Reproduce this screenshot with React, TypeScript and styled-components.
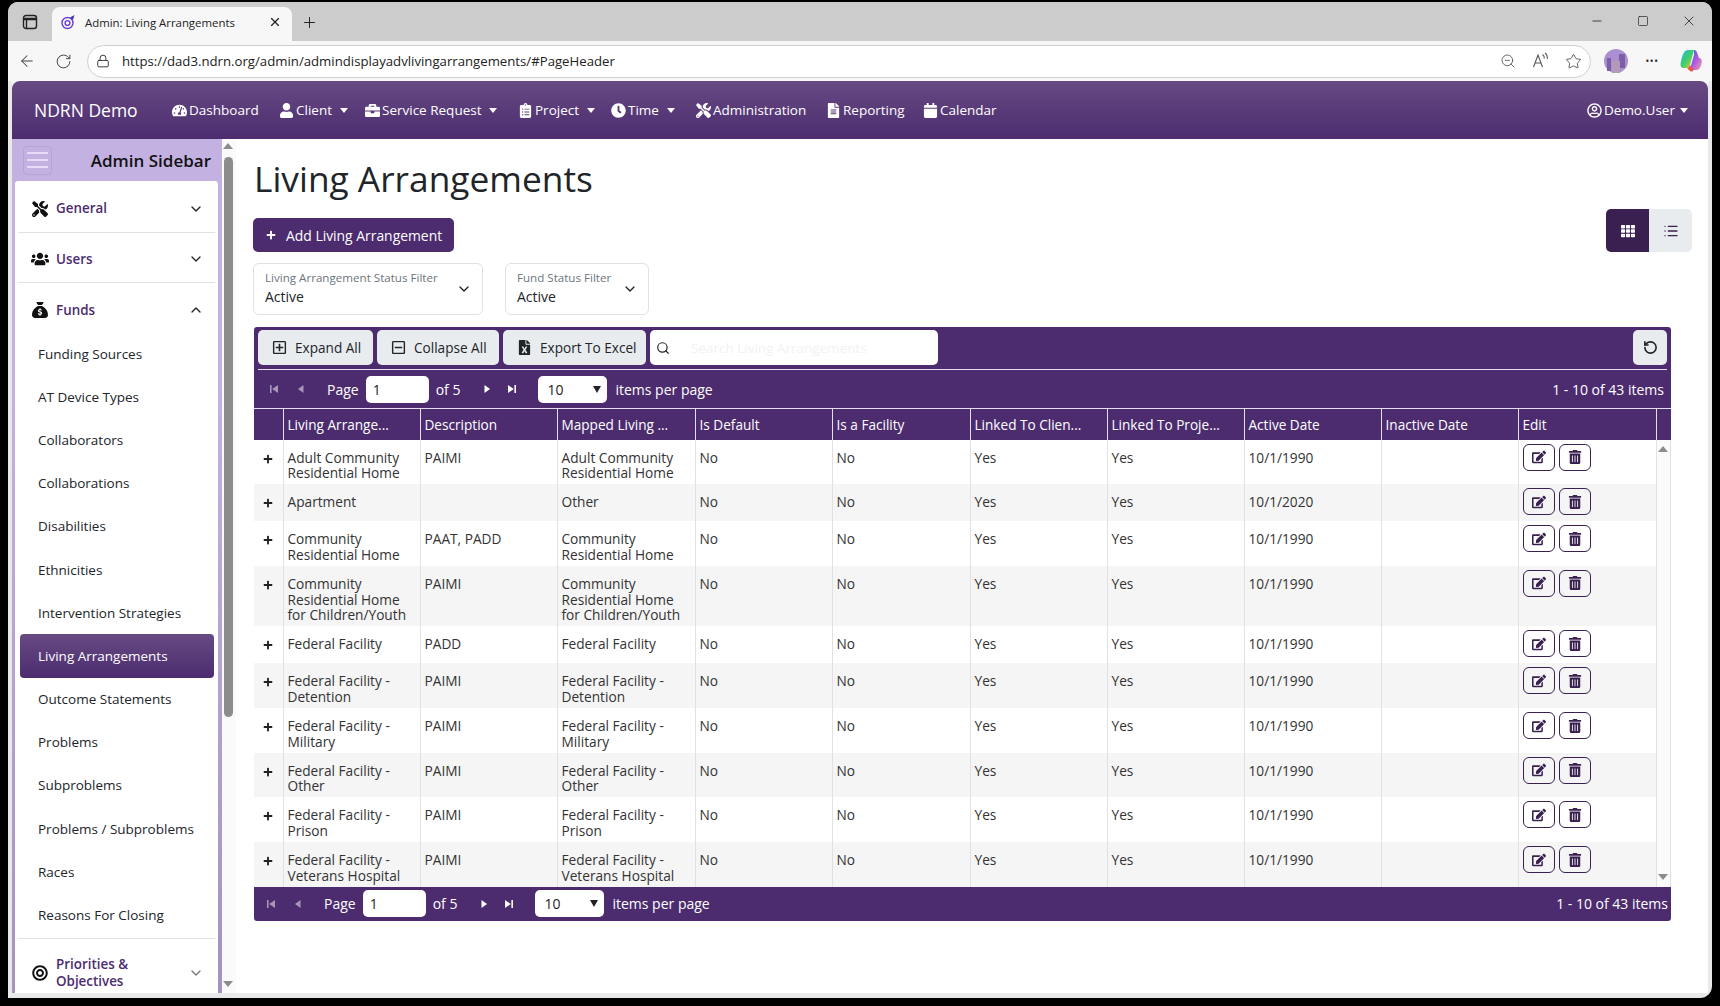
import React from 'react';
import styled, { createGlobalStyle } from 'styled-components';
import {
  FaTachometerAlt,
  FaUser,
  FaBriefcase,
  FaClipboardList,
  FaClock,
  FaTools,
  FaFileAlt,
  FaCalendar,
  FaRegUserCircle,
  FaUsers,
  FaBullseye,
  FaEdit,
  FaTrashAlt,
  FaTh,
  FaFileExcel,
  FaRegPlusSquare,
  FaRegMinusSquare,
  FaPlus,
} from 'react-icons/fa';
import { FaSackDollar } from 'react-icons/fa6';
import {
  ArrowLeft,
  ChevronDown,
  ChevronUp,
  List,
  Lock,
  Minus,
  Plus,
  RotateCcw,
  RotateCw,
  Search,
  Square,
  Star,
  X,
  ZoomOut,
} from 'lucide-react';

const PURPLE = '#4c2c6f';
const FONT = '"Open Sans", "Noto Sans", "Liberation Sans", sans-serif';

const GlobalStyle = createGlobalStyle`
  html, body {
    margin: 0;
    height: 100%;
    background: #000;
    overflow: hidden;
  }
  body {
    font-family: ${FONT};
    font-size: 14px;
    color: #212529;
  }
  * { box-sizing: border-box; }
`;

const Frame = styled.div`
  width: 1704px;
  height: 996px;
  margin: 2px 0 0 8px;
  border-radius: 10px 10px 12px 0;
  background: #e9e9e9;
  overflow: hidden;
  display: flex;
  flex-direction: column;
`;

/* browser chrome */
const TabStrip = styled.div`
  height: 39px;
  background: #cccccc;
  display: flex;
  align-items: flex-end;
  flex-shrink: 0;
`;

const TabToggle = styled.div`
  width: 44px;
  height: 34px;
  display: flex;
  align-items: center;
  justify-content: center;
  padding-bottom: 4px;
  color: #222;
`;

const ActiveTab = styled.div`
  width: 240px;
  height: 34px;
  background: #f7f7f7;
  border-radius: 8px 8px 0 0;
  display: flex;
  align-items: center;
  padding: 0 10px 4px 8px;
  gap: 9px;
  font-size: 11.4px;
  color: #222;
`;

const TabTitle = styled.span`
  flex: 1;
`;

const NewTab = styled.div`
  width: 34px;
  height: 34px;
  display: flex;
  align-items: center;
  justify-content: center;
  padding-bottom: 4px;
  color: #222;
`;

const WindowControls = styled.div`
  margin-left: auto;
  align-self: flex-start;
  display: flex;
  margin-top: 8px;
  padding-right: 0;
`;

const WindowButton = styled.div`
  width: 46px;
  height: 22px;
  display: flex;
  align-items: center;
  justify-content: center;
  color: #222;
`;

const AddressRow = styled.div`
  height: 40px;
  background: #f7f7f7;
  display: flex;
  align-items: center;
  flex-shrink: 0;
  padding-left: 1px;
`;

const ChromeButton = styled.div<{ $w?: number }>`
  width: ${(p) => p.$w || 36}px;
  height: 32px;
  display: flex;
  align-items: center;
  justify-content: center;
  color: #444;
  flex-shrink: 0;
`;

const Dots = styled(ChromeButton)`
  font-size: 10px;
  letter-spacing: 0.5px;
  color: #222;
`;

const UrlBar = styled.div`
  width: 1504px;
  height: 33px;
  margin-left: 6px;
  border: 1px solid #cfcfcf;
  border-radius: 17px;
  background: #fff;
  display: flex;
  align-items: center;
  padding-left: 8px;
  flex-shrink: 0;
`;

const UrlText = styled.span`
  margin-left: 12px;
  font-size: 13.2px;
  color: #222;
  flex: 1;
`;

/* page */
const Page = styled.div`
  flex: 1;
  min-height: 0;
  margin: 0 4px 5px;
  background: #fff;
  display: flex;
  flex-direction: column;
`;

const TopNav = styled.nav`
  height: 58px;
  flex-shrink: 0;
  border-radius: 8px 8px 0 0;
  background: linear-gradient(180deg, #674a83 0%, ${PURPLE} 100%);
  display: flex;
  align-items: center;
  padding-left: 22px;
  color: #fff;
`;

const Brand = styled.span`
  font-size: 17.5px;
  width: 138px;
  flex-shrink: 0;
`;

const NavItem = styled.span<{ $w: number }>`
  width: ${(p) => p.$w}px;
  flex-shrink: 0;
  display: flex;
  align-items: center;
  gap: 2px;
  font-size: 13.5px;
  white-space: nowrap;
  svg { font-size: 15px; flex-shrink: 0; }
`;

const Caret = styled.i<{ $ml?: number }>`
  display: inline-block;
  margin-left: ${(p) => p.$ml ?? 6}px;
  border-top: 5px solid currentColor;
  border-left: 4px solid transparent;
  border-right: 4px solid transparent;
`;

const NavRight = styled.div`
  margin-left: auto;
  padding-right: 22px;
`;

const Body = styled.div`
  flex: 1;
  min-height: 0;
  display: flex;
`;

const Sidebar = styled.aside`
  width: 210px;
  flex-shrink: 0;
  background: linear-gradient(180deg, #c3b1e1 0%, #c3b1e1 30%, #a393bd 100%);
  padding: 0 4px 0 3px;
  display: flex;
  flex-direction: column;
  overflow: hidden;
`;

const SidebarHead = styled.div`
  height: 42px;
  flex-shrink: 0;
  display: flex;
  align-items: center;
  justify-content: space-between;
  padding: 0 7px 0 8px;
`;

const Burger = styled.div`
  width: 29px;
  height: 29px;
  border: 1px solid #b4a3d3;
  border-radius: 4px;
  display: flex;
  flex-direction: column;
  justify-content: center;
  gap: 5px;
  padding: 0 3px;
  i {
    display: block;
    height: 2px;
    background: #e6dcf5;
  }
`;

const SidebarTitle = styled.span`
  font-size: 17px;
  font-weight: 600;
  color: #111;
`;

const SidebarCard = styled.div`
  flex: 1;
  min-height: 0;
  background: #fff;
  border-radius: 3px 3px 0 0;
  padding: 0 3px;
  overflow: hidden;
`;

const AccordionHead = styled.div<{ $h: number; $top?: number; $last?: boolean }>`
  height: ${(p) => p.$h}px;
  display: flex;
  align-items: center;
  padding: ${(p) => p.$top ?? 4}px 11px 0 13px;
  border-bottom: ${(p) => (p.$last ? 'none' : '1px solid #dee2e6')};
  color: ${PURPLE};
  font-weight: 600;
  font-size: 13.4px;
  line-height: 17px;
  > svg:first-child {
    width: 18px;
    flex-shrink: 0;
    color: #111;
    font-size: 16px;
  }
`;

const AccordionLabel = styled.span`
  margin-left: 7px;
  flex: 1;
`;

const SubItem = styled.div<{ $active?: boolean }>`
  height: 43.2px;
  display: flex;
  align-items: center;
  padding-left: 18px;
  margin: 0 1px 0 2px;
  font-size: 13.5px;
  border-radius: 4px;
  color: ${(p) => (p.$active ? '#fff' : '#212529')};
  background: ${(p) => (p.$active ? `linear-gradient(180deg, #674a83 0%, ${PURPLE} 100%)` : 'transparent')};
`;

const SubList = styled.div`
  padding-bottom: 1px;
  border-bottom: 1px solid #dee2e6;
  margin-top: -1px;
`;

const SideScroll = styled.div`
  width: 14px;
  flex-shrink: 0;
  background: #fafafa;
  display: flex;
  flex-direction: column;
  align-items: center;
  padding: 4px 2px 6px 0;
`;

const ArrowUp = styled.i`
  border-bottom: 6px solid #8c8c8c;
  border-left: 5px solid transparent;
  border-right: 5px solid transparent;
`;

const ArrowDown = styled.i`
  border-top: 6px solid #8c8c8c;
  border-left: 5px solid transparent;
  border-right: 5px solid transparent;
`;

const SideThumb = styled.div`
  width: 9px;
  height: 560px;
  margin-top: 8px;
  background: #8c8c8c;
  border-radius: 5px;
`;

const ThumbGap = styled.div`
  flex: 1;
`;

const Content = styled.main`
  flex: 1;
  min-width: 0;
  padding: 18px 16px 0 17px;
`;

const HeadRow = styled.div`
  display: flex;
  justify-content: space-between;
  align-items: flex-end;
`;

const Title = styled.h1`
  margin: 0 0 19px 1px;
  font-size: 35.3px;
  line-height: 42px;
  font-weight: 500;
  color: #212529;
`;

const AddButton = styled.button`
  display: flex;
  align-items: center;
  gap: 10px;
  width: 201px;
  height: 34px;
  padding: 0 0 0 13px;
  border: none;
  border-radius: 5px;
  background: ${PURPLE};
  color: #fff;
  font: 500 13.9px ${FONT};
  svg { font-size: 10px; }
`;

const ViewToggle = styled.div`
  display: flex;
  border-radius: 5px;
  overflow: hidden;
`;

const ViewButton = styled.div<{ $on?: boolean }>`
  width: 43px;
  height: 43px;
  display: flex;
  align-items: center;
  justify-content: center;
  background: ${(p) => (p.$on ? '#3a2050' : '#e9ecef')};
  color: ${(p) => (p.$on ? '#fff' : '#3a2050')};
`;

const FilterRow = styled.div`
  display: flex;
  gap: 22px;
  margin-top: 11px;
`;

const FilterBox = styled.div<{ $w: number }>`
  width: ${(p) => p.$w}px;
  height: 52px;
  border: 1px solid #dee2e6;
  border-radius: 6px;
  padding: 6px 10px 0 11px;
  position: relative;
  background: #fff;
`;

const FilterLabel = styled.div`
  font-size: 11.6px;
  line-height: 16px;
  color: #6c757d;
  white-space: nowrap;
`;

const FilterValue = styled.div`
  font-size: 14px;
  line-height: 20px;
  margin-top: 1px;
`;

const FilterChevron = styled.span`
  position: absolute;
  right: 10px;
  top: 17px;
  display: flex;
  color: #222;
`;

const Grid = styled.div`
  width: 1417px;
  margin: 12px 0 0 1px;
  background: ${PURPLE};
  border-radius: 3px;
  overflow: hidden;
`;

const ToolBar = styled.div`
  height: 43px;
  margin: 0 4px;
  border-bottom: 1px solid #e4deee;
  display: flex;
  align-items: flex-start;
  padding-top: 3px;
  gap: 4px;
`;

const ToolButton = styled.button<{ $w: number }>`
  width: ${(p) => p.$w}px;
  height: 35px;
  border: none;
  border-radius: 5px;
  background: #e9ecef;
  color: #212529;
  display: flex;
  align-items: center;
  gap: 8px;
  padding: 0 0 0 14px;
  font: 13.6px ${FONT};
  white-space: nowrap;
  svg { font-size: 15px; flex-shrink: 0; }
`;

const SearchBox = styled.div`
  width: 288px;
  height: 35px;
  border-radius: 5px;
  background: #fff;
  display: flex;
  align-items: center;
  padding-left: 6px;
  color: #222;
`;

const SearchHint = styled.span`
  margin-left: 21px;
  font-size: 13.5px;
  color: #f2f2f2;
`;

const RefreshButton = styled.button`
  margin-left: auto;
  width: 34px;
  height: 35px;
  border: none;
  border-radius: 5px;
  background: #e9ecef;
  color: #212529;
  display: flex;
  align-items: center;
  justify-content: center;
  padding: 0;
`;

const Pager = styled.div<{ $h: number; $left: number; $right: number }>`
  height: ${(p) => p.$h}px;
  display: flex;
  align-items: center;
  padding: 0 ${(p) => p.$right}px 0 ${(p) => p.$left}px;
  color: #fff;
  font-size: 14px;
  white-space: nowrap;
`;

const PagerNav = styled.span<{ $w: number; $dim?: boolean }>`
  width: ${(p) => p.$w}px;
  flex-shrink: 0;
  display: flex;
  opacity: ${(p) => (p.$dim ? 0.5 : 1)};
`;

const PageInput = styled.div`
  width: 63px;
  height: 27px;
  margin: 0 7px 0 7px;
  background: #fff;
  border-radius: 5px;
  color: #212529;
  display: flex;
  align-items: center;
  padding-left: 7px;
`;

const PageSize = styled.div`
  width: 69px;
  height: 27px;
  margin: 0 8px 0 19px;
  background: #fff;
  border-radius: 5px;
  color: #212529;
  display: flex;
  align-items: center;
  justify-content: space-between;
  padding: 0 6px 0 9px;
`;

const PageSizeCaret = styled.i`
  border-top: 7px solid #222;
  border-left: 4px solid transparent;
  border-right: 4px solid transparent;
`;

const PagerTotal = styled.span`
  margin-left: auto;
`;

const HeadTable = styled.table`
  width: 100%;
  border-collapse: collapse;
  table-layout: fixed;
  border-top: 1px solid #e4deee;
  color: #fff;
`;

const HeadCell = styled.th`
  height: 31px;
  padding: 0 4px;
  font: 13.6px ${FONT};
  text-align: left;
  border-right: 1px solid #e4deee;
  white-space: nowrap;
`;

const RowsWrap = styled.div`
  height: 447px;
  display: flex;
  background: #fff;
  overflow: hidden;
`;

const RowsTable = styled.table`
  width: 1401px;
  flex-shrink: 0;
  align-self: flex-start;
  border-collapse: collapse;
  table-layout: fixed;
`;

const Row = styled.tr<{ $alt: boolean }>`
  background: ${(p) => (p.$alt ? '#f5f5f5' : '#fff')};
`;

const Cell = styled.td`
  padding: 10px 4px 3.3px;
  vertical-align: top;
  font-size: 13.7px;
  line-height: 15.7px;
  color: #333;
  border-right: 1px solid #e0e0e6;
`;

const PlusCell = styled(Cell)`
  padding: 14px 0 0 9px;
  color: #222;
  svg { display: block; font-size: 10px; }
`;

const ActionCell = styled(Cell)`
  padding: 4px 0 6px 4px;
`;

const ActionGroup = styled.div`
  display: flex;
  gap: 4px;
`;

const ActionButton = styled.button`
  width: 32px;
  height: 27px;
  padding: 0;
  border: 1px solid #3a2050;
  border-radius: 6px;
  background: transparent;
  color: #3a2050;
  display: flex;
  align-items: center;
  justify-content: center;
  font-size: 14px;
`;

const RowsScroll = styled.div`
  flex: 1;
  background: #fbfbfb;
  border-right: 1px solid #e0e0e6;
  display: flex;
  flex-direction: column;
  align-items: center;
  justify-content: space-between;
  padding: 6px 0 7px;
`;

const COLS = [29, 137, 137, 138, 137, 138, 137, 137, 137, 137, 138];

const NAV = [
  { icon: <FaTachometerAlt />, label: 'Dashboard', w: 107 },
  { icon: <FaUser />, label: 'Client', w: 86, caret: true },
  { icon: <FaBriefcase />, label: 'Service Request', w: 153, caret: true },
  { icon: <FaClipboardList />, label: 'Project', w: 93, caret: true },
  { icon: <FaClock />, label: 'Time', w: 85, caret: true },
  { icon: <FaTools />, label: 'Administration', w: 130 },
  { icon: <FaFileAlt />, label: 'Reporting', w: 97 },
  { icon: <FaCalendar />, label: 'Calendar', w: 80 },
];

const FUNDS = [
  'Funding Sources',
  'AT Device Types',
  'Collaborators',
  'Collaborations',
  'Disabilities',
  'Ethnicities',
  'Intervention Strategies',
  'Living Arrangements',
  'Outcome Statements',
  'Problems',
  'Subproblems',
  'Problems / Subproblems',
  'Races',
  'Reasons For Closing',
];

const HEADERS = [
  '',
  'Living Arrange...',
  'Description',
  'Mapped Living ...',
  'Is Default',
  'Is a Facility',
  'Linked To Clien...',
  'Linked To Proje...',
  'Active Date',
  'Inactive Date',
  'Edit',
];

const ROWS = [
  { name: 'Adult Community Residential Home', desc: 'PAIMI', mapped: 'Adult Community Residential Home', date: '10/1/1990' },
  { name: 'Apartment', desc: '', mapped: 'Other', date: '10/1/2020' },
  { name: 'Community Residential Home', desc: 'PAAT, PADD', mapped: 'Community Residential Home', date: '10/1/1990' },
  { name: 'Community Residential Home for Children/Youth', desc: 'PAIMI', mapped: 'Community Residential Home for Children/Youth', date: '10/1/1990' },
  { name: 'Federal Facility', desc: 'PADD', mapped: 'Federal Facility', date: '10/1/1990' },
  { name: 'Federal Facility - Detention', desc: 'PAIMI', mapped: 'Federal Facility - Detention', date: '10/1/1990' },
  { name: 'Federal Facility - Military', desc: 'PAIMI', mapped: 'Federal Facility - Military', date: '10/1/1990' },
  { name: 'Federal Facility - Other', desc: 'PAIMI', mapped: 'Federal Facility - Other', date: '10/1/1990' },
  { name: 'Federal Facility - Prison', desc: 'PAIMI', mapped: 'Federal Facility - Prison', date: '10/1/1990' },
  { name: 'Federal Facility - Veterans Hospital', desc: 'PAIMI', mapped: 'Federal Facility - Veterans Hospital', date: '10/1/1990' },
];

const PagerIcon: React.FC<{ kind: 'first' | 'prev' | 'next' | 'last' }> = ({ kind }) => (
  <svg width="10" height="10" viewBox="0 0 10 10" fill="#fff">
    {kind === 'first' && <path d="M1 1h1.6v8H1zM9 1v8L3.2 5z" />}
    {kind === 'prev' && <path d="M7.5 1v8L2 5z" />}
    {kind === 'next' && <path d="M2.5 1v8L8 5z" />}
    {kind === 'last' && <path d="M9 1H7.4v8H9zM1 1v8l5.8-4z" />}
  </svg>
);

const PagerControls: React.FC = () => (
  <>
    <PagerNav $w={27} $dim><PagerIcon kind="first" /></PagerNav>
    <PagerNav $w={31} $dim><PagerIcon kind="prev" /></PagerNav>
    <span>Page</span>
    <PageInput>1</PageInput>
    <span>of 5</span>
    <PagerNav $w={22}><span /></PagerNav>
    <PagerNav $w={25}><PagerIcon kind="next" /></PagerNav>
    <PagerNav $w={12}><PagerIcon kind="last" /></PagerNav>
    <PageSize>10<PageSizeCaret /></PageSize>
    <span>items per page</span>
    <PagerTotal>1 - 10 of 43 items</PagerTotal>
  </>
);

const TabIcon = () => (
  <svg width="16" height="16" viewBox="0 0 16 16" fill="none" stroke="#222" strokeWidth="1.4">
    <rect x="1.5" y="1.5" width="13" height="13" rx="2.5" />
    <path d="M1.5 5h13" strokeWidth="2.6" />
    <path d="M4.5 5v9" />
  </svg>
);

const Favicon = () => (
  <svg width="16" height="16" viewBox="0 0 16 16" fill="none" stroke="#6a3fd0" strokeWidth="1.4">
    <circle cx="7.5" cy="9" r="5.5" />
    <circle cx="7.5" cy="9" r="2.4" />
    <path d="M10 3.5 14.5 1 13 6z" fill="#3b3bb0" stroke="none" />
  </svg>
);

const ReadAloud = () => (
  <svg width="20" height="20" viewBox="0 0 20 20" fill="none" stroke="#555" strokeWidth="1.1">
    <path d="M2.5 16 7 4l4.5 12M4 12h6" />
    <path d="M11.5 3.5c1.5 1 2 2.400 1.800 4M14 2c2 1.500 2.600 3.500 2.300 6" />
  </svg>
);

const Avatar = () => (
  <svg width="24" height="24" viewBox="0 0 24 24">
    <circle cx="12" cy="12" r="12" fill="#ab8fd0" />
    <path d="M3 9h4v13H3zM15 5h6v14h-6z" fill="#7b5fa6" />
    <path d="M8 12h8v12H8z" fill="#b39ab8" />
  </svg>
);

const Copilot = () => (
  <svg width="22" height="24" viewBox="0 0 22 24">
    <defs>
      <linearGradient id="cpA" x1="0" y1="0" x2="1" y2="1">
        <stop offset="0" stopColor="#1fb6e8" />
        <stop offset="0.5" stopColor="#3ccf6a" />
        <stop offset="1" stopColor="#f5c53a" />
      </linearGradient>
      <linearGradient id="cpB" x1="0" y1="0" x2="1" y2="1">
        <stop offset="0" stopColor="#2a5ee0" />
        <stop offset="0.5" stopColor="#b05ae0" />
        <stop offset="1" stopColor="#f0a0b0" />
      </linearGradient>
    </defs>
    <path d="M8 1h6l-4 15c-.5 2-2 3-4 3H4c-2.500 0-4-2-3.300-5C1.500 9 3 5 4 3.500 5 2 6 1 8 1z" fill="url(#cpA)" />
    <path d="M14 1c1.500 0 2.500 1 3 2.500L19 9c1.800 0 3 1.500 2.800 4-.4 4-2.300 8-4.800 8h-4.500l-2-3L14 6z" fill="url(#cpB)" />
    <path d="M10 16c-.5 2-2 3-3 3l3 3c1.500 1 3 .5 3.500-1z" fill="#f0543c" />
  </svg>
);

const App: React.FC = () => (
  <>
    <GlobalStyle />
    <Frame>
      <TabStrip>
        <TabToggle><TabIcon /></TabToggle>
        <ActiveTab>
          <Favicon />
          <TabTitle>Admin: Living Arrangements</TabTitle>
          <X size={14} />
        </ActiveTab>
        <NewTab><Plus size={17} strokeWidth={1.4} /></NewTab>
        <WindowControls>
          <WindowButton><Minus size={14} strokeWidth={1.4} /></WindowButton>
          <WindowButton><Square size={12} strokeWidth={1.4} /></WindowButton>
          <WindowButton><X size={16} strokeWidth={1.2} /></WindowButton>
        </WindowControls>
      </TabStrip>
      <AddressRow>
        <ChromeButton><ArrowLeft size={18} strokeWidth={1.4} /></ChromeButton>
        <ChromeButton><RotateCw size={17} strokeWidth={1.4} /></ChromeButton>
        <UrlBar>
          <Lock size={14} strokeWidth={1.5} />
          <UrlText>https://dad3.ndrn.org/admin/admindisplayadvlivingarrangements/#PageHeader</UrlText>
          <ChromeButton $w={32}><ZoomOut size={16} strokeWidth={1.2} /></ChromeButton>
          <ChromeButton $w={33}><ReadAloud /></ChromeButton>
          <ChromeButton $w={33}><Star size={17} strokeWidth={1.2} /></ChromeButton>
        </UrlBar>
        <ChromeButton $w={50}><Avatar /></ChromeButton>
        <Dots $w={22}>•••</Dots>
        <ChromeButton $w={56}><Copilot /></ChromeButton>
      </AddressRow>
      <Page>
        <TopNav>
          <Brand>NDRN Demo</Brand>
          {NAV.map((n) => (
            <NavItem key={n.label} $w={n.w}>
              {n.icon}
              {n.label}
              {n.caret && <Caret />}
            </NavItem>
          ))}
          <NavRight>
            <NavItem $w={99}>
              <FaRegUserCircle />
              Demo.User
              <Caret $ml={3} />
            </NavItem>
          </NavRight>
        </TopNav>
        <Body>
          <Sidebar>
            <SidebarHead>
              <Burger><i /><i /><i /></Burger>
              <SidebarTitle>Admin Sidebar</SidebarTitle>
            </SidebarHead>
            <SidebarCard>
              <AccordionHead $h={52}>
                <FaTools />
                <AccordionLabel>General</AccordionLabel>
                <ChevronDown size={16} color="#222" />
              </AccordionHead>
              <AccordionHead $h={50} $top={3}>
                <FaUsers />
                <AccordionLabel>Users</AccordionLabel>
                <ChevronDown size={16} color="#222" />
              </AccordionHead>
              <AccordionHead $h={50} $last>
                <FaSackDollar />
                <AccordionLabel>Funds</AccordionLabel>
                <ChevronUp size={16} color="#222" />
              </AccordionHead>
              <SubList>
                {FUNDS.map((f) => (
                  <SubItem key={f} $active={f === 'Living Arrangements'}>{f}</SubItem>
                ))}
              </SubList>
              <AccordionHead $h={56} $top={12} $last>
                <FaBullseye />
                <AccordionLabel>Priorities &<br />Objectives</AccordionLabel>
                <ChevronDown size={16} color="#777" />
              </AccordionHead>
            </SidebarCard>
          </Sidebar>
          <SideScroll>
            <ArrowUp />
            <SideThumb />
            <ThumbGap />
            <ArrowDown />
          </SideScroll>
          <Content>
            <HeadRow>
              <div>
                <Title>Living Arrangements</Title>
                <AddButton><FaPlus />Add Living Arrangement</AddButton>
              </div>
              <ViewToggle>
                <ViewButton $on><FaTh size={14} /></ViewButton>
                <ViewButton><List size={16} /></ViewButton>
              </ViewToggle>
            </HeadRow>
            <FilterRow>
              <FilterBox $w={230}>
                <FilterLabel>Living Arrangement Status Filter</FilterLabel>
                <FilterValue>Active</FilterValue>
                <FilterChevron><ChevronDown size={16} /></FilterChevron>
              </FilterBox>
              <FilterBox $w={144}>
                <FilterLabel>Fund Status Filter</FilterLabel>
                <FilterValue>Active</FilterValue>
                <FilterChevron><ChevronDown size={16} /></FilterChevron>
              </FilterBox>
            </FilterRow>
            <Grid>
              <ToolBar>
                <ToolButton $w={115}><FaRegPlusSquare />Expand All</ToolButton>
                <ToolButton $w={122}><FaRegMinusSquare />Collapse All</ToolButton>
                <ToolButton $w={143}><FaFileExcel />Export To Excel</ToolButton>
                <SearchBox>
                  <Search size={14} />
                  <SearchHint>Search Living Arrangements</SearchHint>
                </SearchBox>
                <RefreshButton><RotateCcw size={15} strokeWidth={2.6} /></RefreshButton>
              </ToolBar>
              <Pager $h={38} $left={15} $right={7}><PagerControls /></Pager>
              <HeadTable>
                <colgroup>
                  {COLS.map((w, i) => <col key={i} style={{ width: w }} />)}
                  <col />
                </colgroup>
                <thead>
                  <tr>
                    {HEADERS.map((h, i) => <HeadCell key={i}>{h}</HeadCell>)}
                    <th />
                  </tr>
                </thead>
              </HeadTable>
              <RowsWrap>
                <RowsTable>
                  <colgroup>
                    {COLS.map((w, i) => <col key={i} style={{ width: w }} />)}
                  </colgroup>
                  <tbody>
                    {ROWS.map((r, i) => (
                      <Row key={r.name} $alt={i % 2 === 1}>
                        <PlusCell><FaPlus /></PlusCell>
                        <Cell>{r.name}</Cell>
                        <Cell>{r.desc}</Cell>
                        <Cell>{r.mapped}</Cell>
                        <Cell>No</Cell>
                        <Cell>No</Cell>
                        <Cell>Yes</Cell>
                        <Cell>Yes</Cell>
                        <Cell>{r.date}</Cell>
                        <Cell />
                        <ActionCell>
                          <ActionGroup>
                            <ActionButton><FaEdit /></ActionButton>
                            <ActionButton><FaTrashAlt /></ActionButton>
                          </ActionGroup>
                        </ActionCell>
                      </Row>
                    ))}
                  </tbody>
                </RowsTable>
                <RowsScroll>
                  <ArrowUp />
                  <ArrowDown />
                </RowsScroll>
              </RowsWrap>
              <Pager $h={34} $left={12} $right={3}><PagerControls /></Pager>
            </Grid>
          </Content>
        </Body>
      </Page>
    </Frame>
  </>
);

export default App;
